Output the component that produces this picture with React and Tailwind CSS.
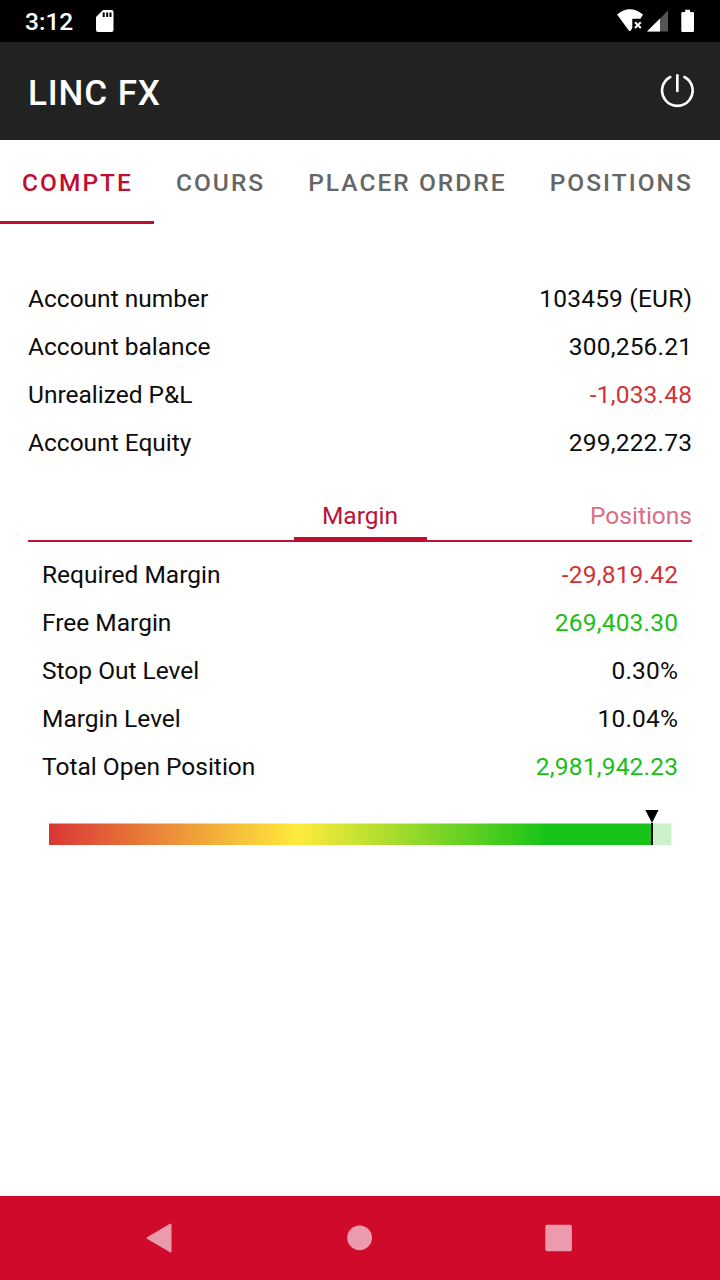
import React, { useState } from 'react';

const TABS = ['COMPTE', 'COURS', 'PLACER ORDRE', 'POSITIONS'];

const ACCOUNT_ROWS = [
  { label: 'Account number', value: '103459 (EUR)' },
  { label: 'Account balance', value: '300,256.21' },
  { label: 'Unrealized P&L', value: '-1,033.48', color: 'text-[#d0333a]' },
  { label: 'Account Equity', value: '299,222.73' },
];

const MARGIN_ROWS = [
  { label: 'Required Margin', value: '-29,819.42', color: 'text-[#d0333a]' },
  { label: 'Free Margin', value: '269,403.30', color: 'text-[#18c018]' },
  { label: 'Stop Out Level', value: '0.30%' },
  { label: 'Margin Level', value: '10.04%' },
  { label: 'Total Open Position', value: '2,981,942.23', color: 'text-[#18c018]' },
];

const StatusBar = () => (
  <div className="flex h-[42px] shrink-0 items-center bg-black pl-[25px] pr-6 text-white">
    <span className="pt-[3px] text-[24.5px] font-medium leading-none">3:12</span>
    <svg className="ml-auto h-[42px] w-[600px]" viewBox="96 0 600 42">
      {/* sd card */}
      <path
        d="M103 10h8.500a2 2 0 0 1 2 2v18a2 2 0 0 1-2 2H98a2 2 0 0 1-2-2V17z"
        fill="#fff"
      />
      <path d="M103.700 12.500v4.500M107.200 12.500v4.500M110.500 12.500v4.500" stroke="#000" strokeWidth="2" />
      {/* wifi */}
      <path
        d="M617 14.500Q629.800 4 643 14.500L640.500 18.700H632.300v9.300L630.500 31h-1.300z"
        fill="#fff"
      />
      <path d="M635 22.200l5.800 5.800M640.800 22.200l-5.800 5.800" stroke="#fff" strokeWidth="2" />
      {/* cell signal */}
      <path d="M668 10.500V31.500H647z" fill="#555" />
      <path d="M660 18.500v13H647z" fill="#fff" />
      {/* battery */}
      <path
        d="M685.200 9.700h4.800v2.300h2.700a1.300 1.300 0 0 1 1.300 1.300v17.400a1.300 1.300 0 0 1-1.300 1.300h-10.100a1.300 1.300 0 0 1-1.300-1.300V13.300a1.300 1.300 0 0 1 1.300-1.300h2.600z"
        fill="#fff"
      />
    </svg>
  </div>
);

const Header = () => (
  <div className="flex h-[98px] shrink-0 items-center justify-between bg-[#222222] pl-7 pr-[25px]">
    <h1 className="pt-1 text-[35px] font-medium leading-none tracking-[0.9px] text-white">LINC FX</h1>
    <button>
      <svg
        className="mb-0.5 h-9 w-9"
        viewBox="0 0 36 36"
        fill="none"
        stroke="#fff"
        strokeWidth="2.6"
        strokeLinecap="round"
      >
        <path d="M11.300 5a15.300 15.300 0 1 0 14.100 0" />
        <path d="M18.350 3.300v15.700" />
      </svg>
    </button>
  </div>
);

const Row = ({ label, value, color = 'text-[#0c0c0c]' }) => (
  <div className="flex h-12 items-center justify-between pt-0.5">
    <span>{label}</span>
    <span className={`-mr-[0.2px] tracking-[0.2px] ${color}`}>{value}</span>
  </div>
);

const MarginGauge = () => (
  <svg className="ml-[21px] mt-5 h-[35px] w-[624px]" viewBox="49 810 624 35">
    <defs>
      <linearGradient id="gauge" gradientUnits="userSpaceOnUse" x1="49" y1="0" x2="671" y2="0">
        <stop offset="0" stopColor="#d93636" />
        <stop offset="0.4" stopColor="#ffeb3b" />
        <stop offset="0.8" stopColor="#18c418" />
      </linearGradient>
    </defs>
    <path d="M49 823.500H652V845H49z" fill="url(#gauge)" />
    <path d="M652 823.500h19.300V845H652z" fill="#ccf2cc" />
    <path d="M651 823h2v22h-2z" fill="#000" />
    <path d="M645.300 810h13.200L652 823z" fill="#000" />
  </svg>
);

const NavBar = () => (
  <div className="flex h-[84px] shrink-0 bg-[#d00a2b]">
    <svg className="h-full w-full" viewBox="0 0 720 84" fill="#eb9bab" stroke="#eb9bab" strokeLinejoin="round">
      <path d="M147.500 42L170.500 28.500V55.500z" strokeWidth="2" />
      <circle cx="359.600" cy="41.800" r="12.400" stroke="none" />
      <rect x="545.300" y="28.700" width="26.600" height="26.600" rx="2" stroke="none" />
    </svg>
  </div>
);

const App = () => {
  const [activeTab, setActiveTab] = useState('COMPTE');

  return (
    <div className="flex h-[1280px] w-[720px] flex-col overflow-hidden bg-white font-['Roboto',sans-serif] text-[24.5px] text-[#0c0c0c]">
      <StatusBar />
      <Header />

      <div className="flex h-[84px] shrink-0">
        {TABS.map((tab) => (
          <button
            key={tab}
            onClick={() => setActiveTab(tab)}
            className={`shrink-0 whitespace-nowrap border-b-[3.5px] pl-[22px] pr-[21px] pt-1.5 font-medium tracking-[2.03px] ${
              activeTab === tab ? 'border-[#c10e30] text-[#c10e30]' : 'border-transparent text-[#666666]'
            }`}
          >
            {tab}
          </button>
        ))}
      </div>

      <div className="flex-1 px-7 pt-[50px]">
        {ACCOUNT_ROWS.map((row) => (
          <Row key={row.label} {...row} />
        ))}

        <div className="mt-[22px] grid h-[54px] grid-cols-[1fr_133px_1fr] border-b-2 border-[#bf1237]">
          <div />
          <div className="-mb-0.5 border-b-[5px] border-[#c10e30] pt-2.5 text-center text-[#b8123a]">
            Margin
          </div>
          <div className="pt-2.5 text-right text-[#d96f86]">Positions</div>
        </div>

        <div className="px-3.5 pt-2">
          {MARGIN_ROWS.map((row) => (
            <Row key={row.label} {...row} />
          ))}
        </div>

        <MarginGauge />
      </div>

      <NavBar />
    </div>
  );
};

export default App;
